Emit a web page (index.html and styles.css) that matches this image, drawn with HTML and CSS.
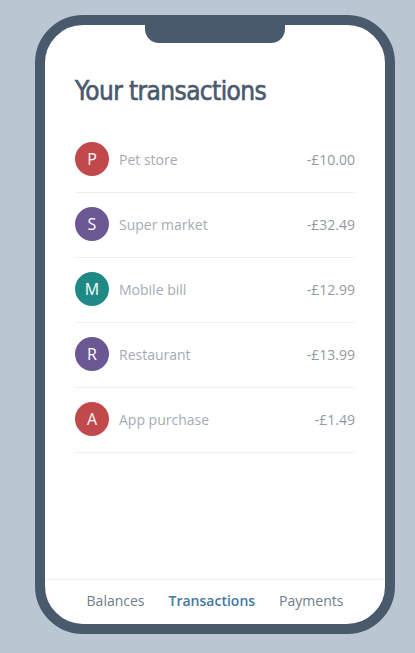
FILE: index.html
```html
<!DOCTYPE html>
<html>
<head>
    <title>Your transactions</title>
    <link rel="stylesheet" href="styles.css">
</head>
<body>
    <div class="phone">
        <div class="notch"></div>

        <div class="content">
            <h1 class="title">Your transactions</h1>

            <ul class="transactions">
                <li class="row">
                    <span class="avatar red">P</span>
                    <span class="name">Pet store</span>
                    <span class="amount">-£10.00</span>
                </li>
                <li class="row">
                    <span class="avatar purple">S</span>
                    <span class="name">Super market</span>
                    <span class="amount">-£32.49</span>
                </li>
                <li class="row">
                    <span class="avatar teal">M</span>
                    <span class="name">Mobile bill</span>
                    <span class="amount">-£12.99</span>
                </li>
                <li class="row">
                    <span class="avatar purple">R</span>
                    <span class="name">Restaurant</span>
                    <span class="amount">-£13.99</span>
                </li>
                <li class="row">
                    <span class="avatar red">A</span>
                    <span class="name">App purchase</span>
                    <span class="amount">-£1.49</span>
                </li>
            </ul>
        </div>

        <nav class="tabs">
            <a class="tab">Balances</a>
            <a class="tab active">Transactions</a>
            <a class="tab">Payments</a>
        </nav>
    </div>
</body>
</html>
```

FILE: styles.css
```css
body { margin: 0; background: #bac7d2; font-family: "Open Sans", sans-serif; }

.phone {
    box-sizing: border-box;
    width: 360px;
    height: 619px;
    margin: 15px 0 0 35px;
    border: 10px solid #4a5a6d;
    border-radius: 48px;
    background: #fff;
    display: flex;
    flex-direction: column;
    overflow: hidden;
}

.notch {
    width: 140px;
    height: 18px;
    margin: 0 auto;
    background: #4a5a6d;
    border-radius: 0 0 14px 14px;
    flex-shrink: 0;
}

.content { flex: 1; padding: 0 30px; }

.title {
    margin: 30px 0 19px;
    font-family: "DejaVu Sans Condensed", "DejaVu Sans", sans-serif;
    font-weight: normal;
    font-size: 26px;
    line-height: 36px;
    color: #4a5a6d;
    letter-spacing: -0.6px;
    -webkit-text-stroke: 0.6px #4a5a6d;
}

.transactions { list-style: none; margin: 0; padding: 0; }

.row {
    display: flex;
    align-items: center;
    padding: 14px 0 16px;
    border-bottom: 1px solid #eef1f4;
}

.avatar {
    width: 34px;
    height: 34px;
    border-radius: 50%;
    color: #fff;
    font-size: 16px;
    line-height: 34px;
    text-align: center;
    margin-right: 10px;
}
.avatar.red { background: #c1494c; }
.avatar.purple { background: #6b5893; }
.avatar.teal { background: #1f8985; }

.name { flex: 1; font-size: 14px; color: #a3acb6; }
.amount { font-size: 14px; color: #8f9aa5; }

.tabs {
    height: 45px;
    padding-bottom: 3px;
    box-sizing: border-box;
    border-top: 1px solid #eef1f4;
    display: flex;
    justify-content: center;
    align-items: center;
    gap: 24px;
    flex-shrink: 0;
}

.tab { font-size: 14px; color: #6f7d8b; }
.tab.active { color: #3f78a0; font-weight: 600; }
```
